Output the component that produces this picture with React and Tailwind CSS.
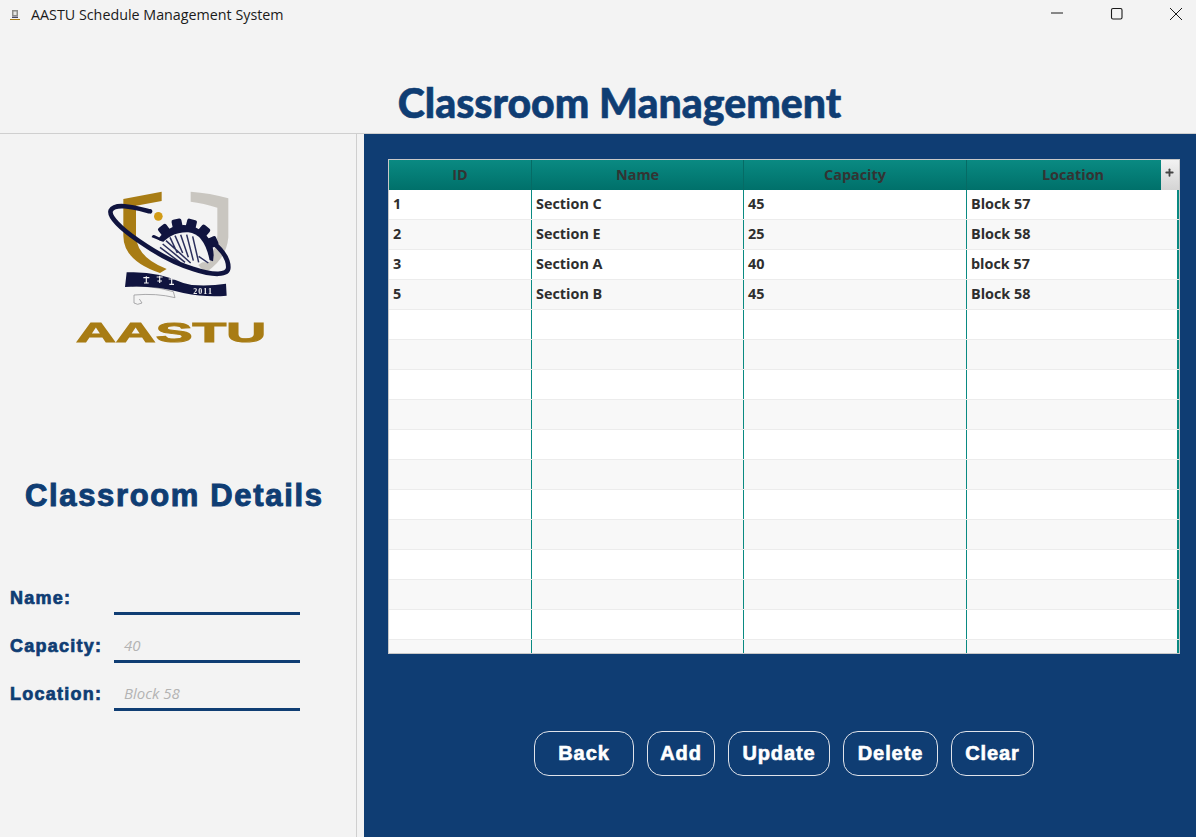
import React from "react";
import { Plus } from "lucide-react";

const rows = [
  { id: "1", name: "Section C", capacity: "45", location: "Block 57" },
  { id: "2", name: "Section E", capacity: "25", location: "Block 58" },
  { id: "3", name: "Section A", capacity: "40", location: "block 57" },
  { id: "5", name: "Section B", capacity: "45", location: "Block 58" },
  ...Array.from({ length: 12 }, () => ({ id: "", name: "", capacity: "", location: "" })),
];

const buttons = [
  { label: "Back", width: "w-[100px]" },
  { label: "Add", width: "w-[68px]" },
  { label: "Update", width: "w-[102px]" },
  { label: "Delete", width: "w-[95px]" },
  { label: "Clear", width: "w-[83px]" },
];

const fields = [
  { label: "Name:", placeholder: "" },
  { label: "Capacity:", placeholder: "40" },
  { label: "Location:", placeholder: "Block 58" },
];

const teeth = [-64, -38, -12, 14, 40, 66];

// drawn in the 3x coordinates of the zoomed logo
const Logo = () => (
  <svg viewBox="0 0 660 525" className="w-[220px] h-[175px] blur-[0.4px]">
    <defs>
      <clipPath id="dome">
        <path d="M240 60 H500 V262 L440 240 L350 205 L268 172 Z" />
      </clipPath>
    </defs>
    <path d="M190 60 L305 38 L305 66 L228 80 L228 170 Q230 235 320 270 L300 282 Q190 245 190 170 Z" fill="#a87c14" />
    <path d="M392 38 Q450 42 505 58 L505 175 Q500 240 435 282 L415 258 Q472 222 472 170 L472 86 Q430 72 392 68 Z" fill="#c9c6c0" />
    <circle cx="295" cy="112" r="13" fill="#d29b16" />
    <g clipPath="url(#dome)">
      <g fill="#10143f">
        {teeth.map((a) => (
          <rect key={a} x="356" y="118" width="30" height="34" rx="6" transform={`rotate(${a} 371 228)`} />
        ))}
        <circle cx="371" cy="228" r="90" />
      </g>
    </g>
    <path d="M296 205 Q330 158 385 160 Q435 165 450 250 L415 250 Z" fill="#f3f3f3" />
    <path d="M300 205 L360 250 M308 195 L375 250 M318 185 L392 252 M330 175 L352 222 M345 170 L368 222 M362 167 L385 235 M380 167 L400 245 M398 172 L416 250 M416 232 L445 252" stroke="#2b2f5c" strokeWidth="4.5" fill="none" />
    <path d="M270 97 C220 85 165 70 152 95 C140 130 300 240 400 270 C460 290 505 290 505 265 C505 235 480 205 450 185" stroke="#10143f" strokeWidth="14" fill="none" strokeLinecap="round" />
    <path d="M215 322 Q270 318 340 338 L345 356 Q290 342 222 348 L222 372 Q232 380 246 372 L238 360" stroke="#9a9a9c" strokeWidth="2.5" fill="#f3f3f3" />
    <path d="M200 280 Q290 275 370 312 L395 318 Q450 322 498 314 L500 350 Q440 356 370 342 Q280 318 195 324 Z" fill="#10143f" />
    <g stroke="#f3f3f3" strokeWidth="3.5" fill="none">
      <path d="M250 296 H268 M259 292 V312 M252 312 H266 M290 294 H308 M299 290 V312 M292 306 H306 M326 300 H344 M335 296 V316 M328 316 H342" />
    </g>
    <text x="400" y="344" fontFamily="'Liberation Serif', serif" fontWeight="700" fontSize="24" letterSpacing="3" fill="#f3f3f3">2011</text>
    <text x="48" y="490" textLength="570" lengthAdjust="spacingAndGlyphs" fontFamily="'Liberation Sans', sans-serif" fontWeight="700" fontSize="84" fill="#a87c14" stroke="#a87c14" strokeWidth="3">AASTU</text>
  </svg>
);

const App = () => (
  <div className="w-[1196px] h-[837px] overflow-hidden flex flex-col bg-[#f3f3f3] font-['Liberation_Sans',sans-serif]">
    {/* window title bar */}
    <div className="h-[30px] flex items-center shrink-0">
      <svg viewBox="0 0 12 12" className="w-[12px] h-[12px] ml-[9px] mb-[1px]">
        <path d="M3 1 H9 V7 H3 Z" fill="#8d8d88" />
        <path d="M4.5 2.5 H7.5 V6 H4.5 Z" fill="#e6e6e2" />
        <path d="M1 10 H11 V11 H1 Z" fill="#a87c14" />
        <path d="M3 7.5 H9 V9 H3 Z" fill="#4a4a60" />
      </svg>
      <span className="ml-[10px] mb-[1px] text-[14.3px] text-[#1a1a1a] font-['Open_Sans',sans-serif]">AASTU Schedule Management System</span>
      <div className="ml-auto mb-[2px] flex items-center">
        <svg width="14" height="14" viewBox="0 0 14 14" className="mr-[46px]"><path d="M1 6 H13" stroke="#1a1a1a" strokeWidth="1" /></svg>
        <svg width="14" height="14" viewBox="0 0 14 14" className="mr-[45px]"><rect x="1.5" y="1.5" width="10.5" height="10.5" rx="1.5" fill="none" stroke="#1a1a1a" strokeWidth="1.1" /></svg>
        <svg width="14" height="14" viewBox="0 0 14 14" className="mr-[13px]"><path d="M1 1 L13 13 M13 1 L1 13" stroke="#1a1a1a" strokeWidth="1" /></svg>
      </div>
    </div>

    {/* page heading */}
    <div className="h-[104px] shrink-0 flex items-end justify-center pl-[43px] pb-[5px] border-b border-[#cfcfcf]">
      <h1 className="text-[41px] leading-[50px] font-black text-[#0f3d73] font-['Lato',sans-serif] [-webkit-text-stroke:0.6px_#0f3d73]">Classroom Management</h1>
    </div>

    <div className="flex flex-1 min-h-0">
      {/* details form */}
      <div className="w-[357px] shrink-0 border-r border-[#cfcfcf] flex flex-col">
        <div className="pt-[45px] pl-[60px]">
          <Logo />
        </div>
        <h2 className="mt-[123px] pl-[25px] text-[31px] leading-[38px] font-bold text-[#0f3d73] tracking-[1.65px] [-webkit-text-stroke:1px_#0f3d73]">Classroom Details</h2>
        <div className="mt-[64px] pl-[10px] flex flex-col gap-[12px]">
          {fields.map((f) => (
            <div key={f.label} className="flex items-start h-[36px]">
              <span className="w-[104px] text-[18px] leading-[24px] mt-[7px] font-bold text-[#0f3d73] tracking-[1.25px] [-webkit-text-stroke:0.7px_#0f3d73]">{f.label}</span>
              <div className="w-[186px] h-[36px] border-b-[3px] border-[#0f3d73] pl-[10px] pt-[6px] text-[15px] leading-[24px] italic text-[#b3b3b3] font-['Open_Sans',sans-serif]">
                {f.placeholder}
              </div>
            </div>
          ))}
        </div>
      </div>
      <div className="w-[7px] shrink-0 bg-[#f3f3f3]" />

      {/* classroom table and actions */}
      <div className="flex-1 bg-[#0f3d73] pl-[24px] pr-[16px] pt-[25px] flex flex-col">
        <div className="w-[792px] h-[495px] bg-white border border-[#c8c8c8] overflow-hidden font-['Open_Sans',sans-serif] text-[14.4px] font-bold text-[#2e2e2e]">
          <div className="relative flex h-[30px] bg-gradient-to-b from-[#0a8a82] to-[#00706a] text-center leading-[29px] text-[#333]">
            <div className="w-[143px] border-r border-[#066b65]">ID</div>
            <div className="w-[212px] border-r border-[#066b65]">Name</div>
            <div className="w-[223px] border-r border-[#066b65]">Capacity</div>
            <div className="w-[212px]">Location</div>
            <div className="absolute right-0 top-0 w-[18px] h-[30px] bg-gradient-to-b from-[#f2f2f2] to-[#d4d4d4] flex items-start justify-center pr-[1px] pt-[7px]">
              <Plus size={11} strokeWidth={4} color="#444" />
            </div>
          </div>
          {rows.map((r, i) => (
            <div key={i} className={`flex h-[30px] leading-[27px] border-b border-[#ececec] ${i % 2 ? "bg-[#f8f8f8]" : "bg-white"}`}>
              <div className="w-[143px] pl-[4px] border-r border-[#0a8a82]">{r.id}</div>
              <div className="w-[212px] pl-[4px] border-r border-[#0a8a82]">{r.name}</div>
              <div className="w-[223px] pl-[4px] border-r border-[#0a8a82]">{r.capacity}</div>
              <div className="w-[212px] pl-[4px] border-r-2 border-[#0a8a82]">{r.location}</div>
            </div>
          ))}
        </div>
        <div className="mt-[77px] pl-[146px] flex gap-[13px]">
          {buttons.map((b) => (
            <button key={b.label} className={`${b.width} h-[45px] pb-[1px] rounded-[15px] border-[1.5px] border-[#dfe3ea] text-white text-[20px] font-bold tracking-[0.9px] [-webkit-text-stroke:0.6px_#fff]`}>
              {b.label}
            </button>
          ))}
        </div>
      </div>
    </div>
  </div>
);

export default App;
